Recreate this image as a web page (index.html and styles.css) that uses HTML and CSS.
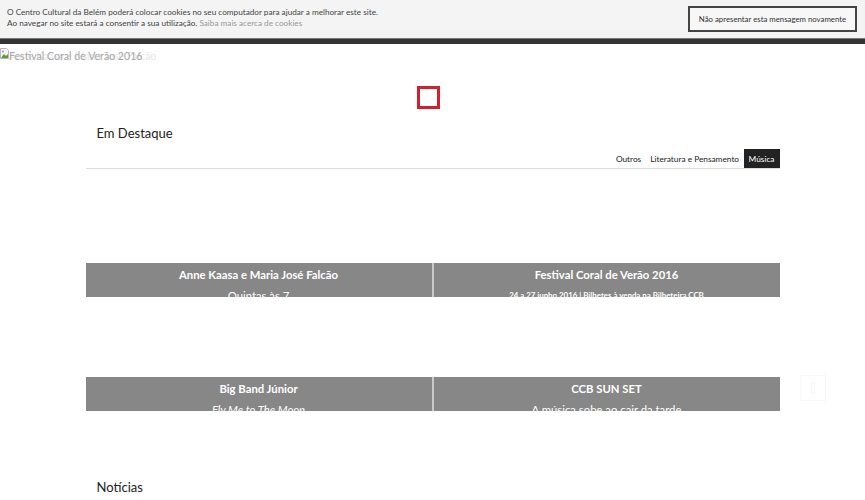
FILE: index.html
```html
<!DOCTYPE html>
<html lang="pt">
<head>
<meta charset="utf-8">
<title>CCB</title>
<link rel="stylesheet" href="styles.css">
</head>
<body>
<div class="cookie">
  <div class="cookie-text">
    <p>O Centro Cultural da Belém poderá colocar cookies no seu computador para ajudar a melhorar este site.</p>
    <p>Ao navegar no site estará a consentir a sua utilização. <a href="#">Saiba mais acerca de cookies</a></p>
  </div>
  <button class="cookie-btn">Não apresentar esta mensagem novamente</button>
</div>

<div class="slider">
  <span class="broken">
    <svg class="broken-icon" width="9" height="11" viewBox="0 0 9 11"><path d="M0.5 0.5h6l2 2v8h-8z" fill="#f4f4f4" stroke="#b8b8b8"/><path d="M1 10l3-4 2 2 2-2v4z" fill="#5a9a3c"/><circle cx="3" cy="3.5" r="1" fill="#6fa0d8"/></svg>
  </span>
  <span class="alt alt-back">Anne Kaasa e Maria José Falcão</span>
  <span class="alt alt-front">Festival Coral de Verão 2016</span>
</div>

<main class="container">
  <div class="logo-row"><span class="logo-box"></span></div>

  <h2 class="section-title">Em Destaque</h2>
  <nav class="tabs">
    <a href="#" class="tab">Outros</a>
    <a href="#" class="tab">Literatura e Pensamento</a>
    <a href="#" class="tab active">Música</a>
  </nav>

  <div class="cards">
    <div class="card">
      <div class="card-img"></div>
      <div class="caption left">
        <h3>Anne Kaasa e Maria José Falcão</h3>
        <p>Quintas às 7</p>
      </div>
    </div>
    <div class="card">
      <div class="card-img"></div>
      <div class="caption">
        <h3>Festival Coral de Verão 2016</h3>
        <p class="small">24 a 27 junho 2016 | Bilhetes à venda na Bilheteira CCB</p>
      </div>
    </div>
    <div class="card">
      <div class="card-img"></div>
      <div class="caption left">
        <h3>Big Band Júnior</h3>
        <p><em>Fly Me to The Moon</em></p>
      </div>
    </div>
    <div class="card">
      <div class="card-img"></div>
      <div class="caption">
        <h3>CCB SUN SET</h3>
        <p>A música sobe ao cair da tarde</p>
      </div>
    </div>
  </div>

  <h2 class="section-title news">Notícias</h2>
</main>

<a href="#" class="to-top"><svg width="12" height="16" viewBox="0 0 12 16"><path d="M4.5 2v12M7.5 2v12" fill="none" stroke="#f4f4f4" stroke-width="1"/></svg></a>
</body>
</html>
```

FILE: styles.css
```css
* { box-sizing: border-box; }
html, body { margin: 0; padding: 0; background: #fff; }
body {
  font-family: "Lato", "Liberation Sans", sans-serif;
  color: #333;
  width: 865px;
  position: relative;
}

.cookie {
  display: flex;
  align-items: center;
  justify-content: space-between;
  height: 44px;
  background: #f4f4f4;
  border-bottom: 5px solid #343434;
  box-shadow: inset 0 -1px 0 #777;
  padding: 0 8px 4px 7px;
}
.cookie-text p {
  margin: 0;
  font-size: 8.2px;
  line-height: 10.5px;
  color: #444;
}
.cookie-text p + p { margin-top: 0.5px; }
.cookie-text a { color: #999; text-decoration: none; }
.cookie-btn {
  font-family: inherit;
  font-size: 7.8px;
  color: #333;
  background: #f7f7f7;
  border: 2px solid #444;
  height: 26px;
  width: 169px;
  padding: 0;
  margin-top: 3px;
}

.slider {
  position: relative;
  height: 36px;
}
.broken { position: absolute; left: 0; top: 4px; }
.broken-icon { display: block; }
.alt {
  position: absolute;
  top: 5px;
  left: 9px;
  font-size: 10.6px;
  line-height: 14px;
  white-space: nowrap;
}
.alt-back { color: #e6e6e6; }
.alt-front { color: #a8a8a8; }

.container {
  width: 694px;
  margin: 0 auto;
}
.logo-row { padding-left: 331px; height: 30px; padding-top: 6px; }
.logo-box {
  display: block;
  width: 23px;
  height: 23px;
  border: 3px solid #d3202f;
}

.section-title {
  margin: 0;
  padding: 14px 0 0 11px;
  font-size: 13px;
  font-weight: 400;
  line-height: 18px;
  color: #222;
}

.tabs {
  display: flex;
  justify-content: flex-end;
  align-items: stretch;
  height: 20px;
  margin-top: 7px;
  border-bottom: 1px solid #ddd;
}
.tab {
  display: flex;
  align-items: center;
  padding: 0 4.5px;
  font-size: 8.3px;
  color: #222;
  text-decoration: none;
}
.tab.active { background: #222; color: #fff; padding: 0 5px; }

.cards {
  display: grid;
  grid-template-columns: 348px 346px;
  margin-top: 14px;
}
.card { display: flex; flex-direction: column; }
.card-img { height: 80px; }
.caption {
  height: 34px;
  overflow: hidden;
  background: #878787;
  color: #fff;
  text-align: center;
}
.caption.left { border-right: 2px solid #cacaca; }
.caption h3 {
  margin: 0;
  padding-top: 4px;
  font-size: 11.3px;
  font-weight: 700;
  line-height: 15px;
}
.caption p {
  margin: 6px 0 0;
  font-size: 11.3px;
  line-height: 15px;
}
.caption p em { font-style: italic; }
.caption p.small {
  font-size: 7.9px;
  font-weight: 700;
  line-height: 10px;
  margin-top: 8px;
}

.section-title.news { padding-top: 67px; }

.to-top {
  position: absolute;
  left: 800px;
  top: 375px;
  width: 26px;
  height: 26px;
  border: 1px solid #f8f8f8;
  display: flex;
  align-items: center;
  justify-content: center;
}
```
